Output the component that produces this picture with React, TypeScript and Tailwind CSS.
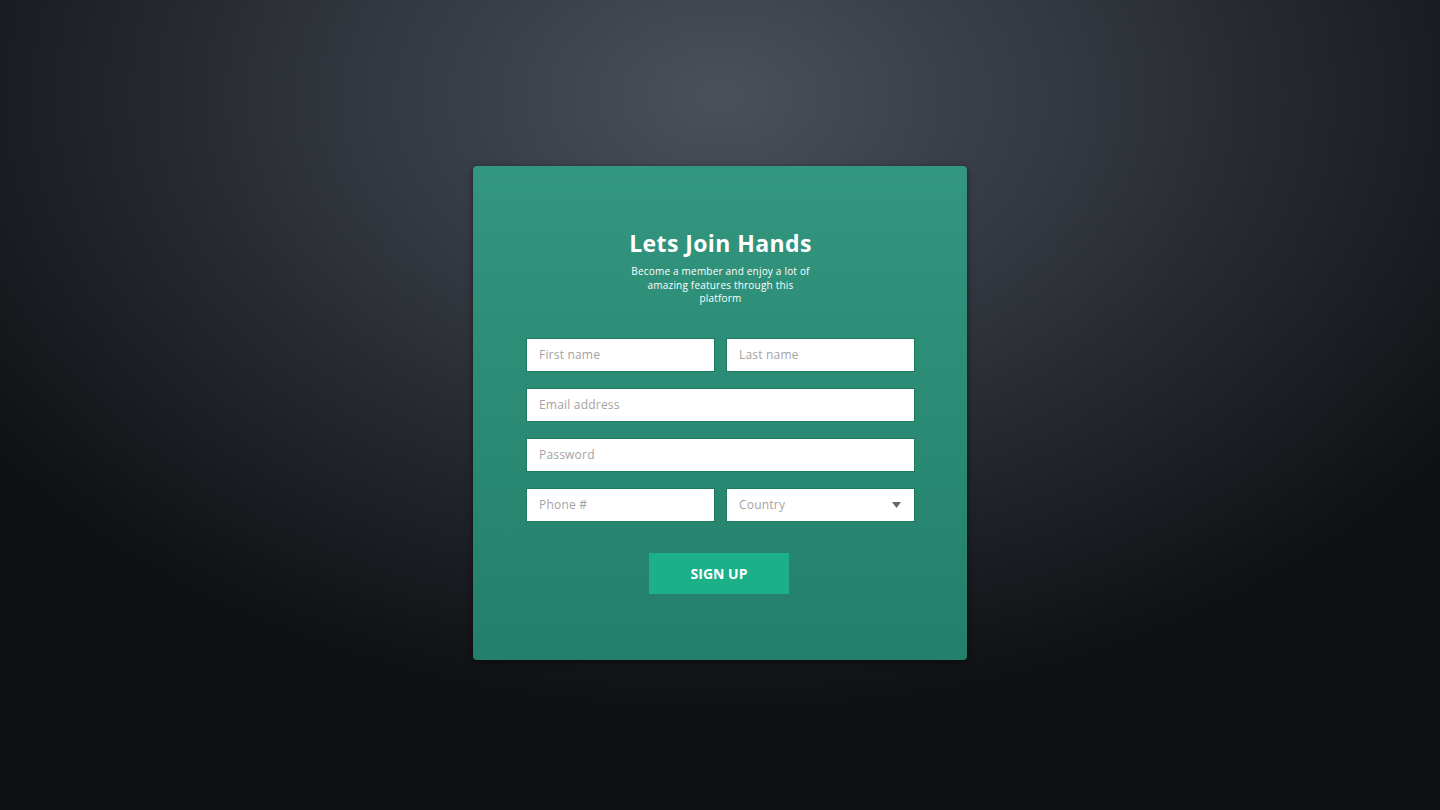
import React from "react";

const font = { fontFamily: '"Open Sans", "Noto Sans", sans-serif' };

function Field({ placeholder, type = "text" }: { placeholder: string; type?: string }) {
  return (
    <input
      type={type}
      placeholder={placeholder}
      className="h-[34px] w-full border border-[#1d7a5c] bg-white px-3 text-[12px] tracking-[0.2px] text-gray-700 outline-none placeholder:text-[#a3a3a3]"
      style={font}
    />
  );
}

export default function App() {
  return (
    <div
      className="flex min-h-[810px] w-full items-center justify-center bg-[radial-gradient(ellipse_900px_620px_at_50%_12%,#4a5159_0%,#33373f_40%,#1d2025_75%,#0e1013_100%)] pt-[16px]"
      style={font}
    >
      <div className="flex h-[494px] w-[494px] flex-col items-center rounded-[4px] bg-gradient-to-b from-[#33967f] to-[#23806a] pl-[53px] pr-[52px] pt-[63px] shadow-[0_2px_6px_rgba(0,0,0,0.5)]">
        <h1 className="text-[23px] font-bold leading-[28px] tracking-[0.4px] text-white">Lets Join Hands</h1>
        <p className="mt-[8px] max-w-[186px] text-center text-[10px] leading-[13.5px] tracking-[0.2px] text-white">
          Become a member and enjoy a lot of amazing features through this platform
        </p>

        <form className="mt-[32px] flex w-full flex-col gap-[16px]">
          <div className="grid grid-cols-2 gap-[11px]">
            <Field placeholder="First name" />
            <Field placeholder="Last name" />
          </div>
          <Field placeholder="Email address" type="email" />
          <Field placeholder="Password" type="password" />
          <div className="grid grid-cols-2 gap-[11px]">
            <Field placeholder="Phone #" />
            <div className="relative">
              <select
                defaultValue=""
                className="h-[34px] w-full appearance-none border border-[#1d7a5c] bg-white px-3 text-[12px] tracking-[0.2px] text-[#a3a3a3] outline-none"
                style={font}
              >
                <option value="" disabled>
                  Country
                </option>
                <option>Indonesia</option>
                <option>Malaysia</option>
                <option>Singapore</option>
              </select>
              <svg
                className="pointer-events-none absolute right-[14px] top-[14px]"
                width="9"
                height="6"
                viewBox="0 0 9 6"
              >
                <path d="M0 0h9L4.5 6z" fill="#666" />
              </svg>
            </div>
          </div>
        </form>

        <button
          type="button"
          className="mr-[3px] mt-[31px] h-[41px] w-[140px] bg-[#1bb088] text-[14px] font-bold text-white"
        >
          SIGN UP
        </button>
      </div>
    </div>
  );
}
